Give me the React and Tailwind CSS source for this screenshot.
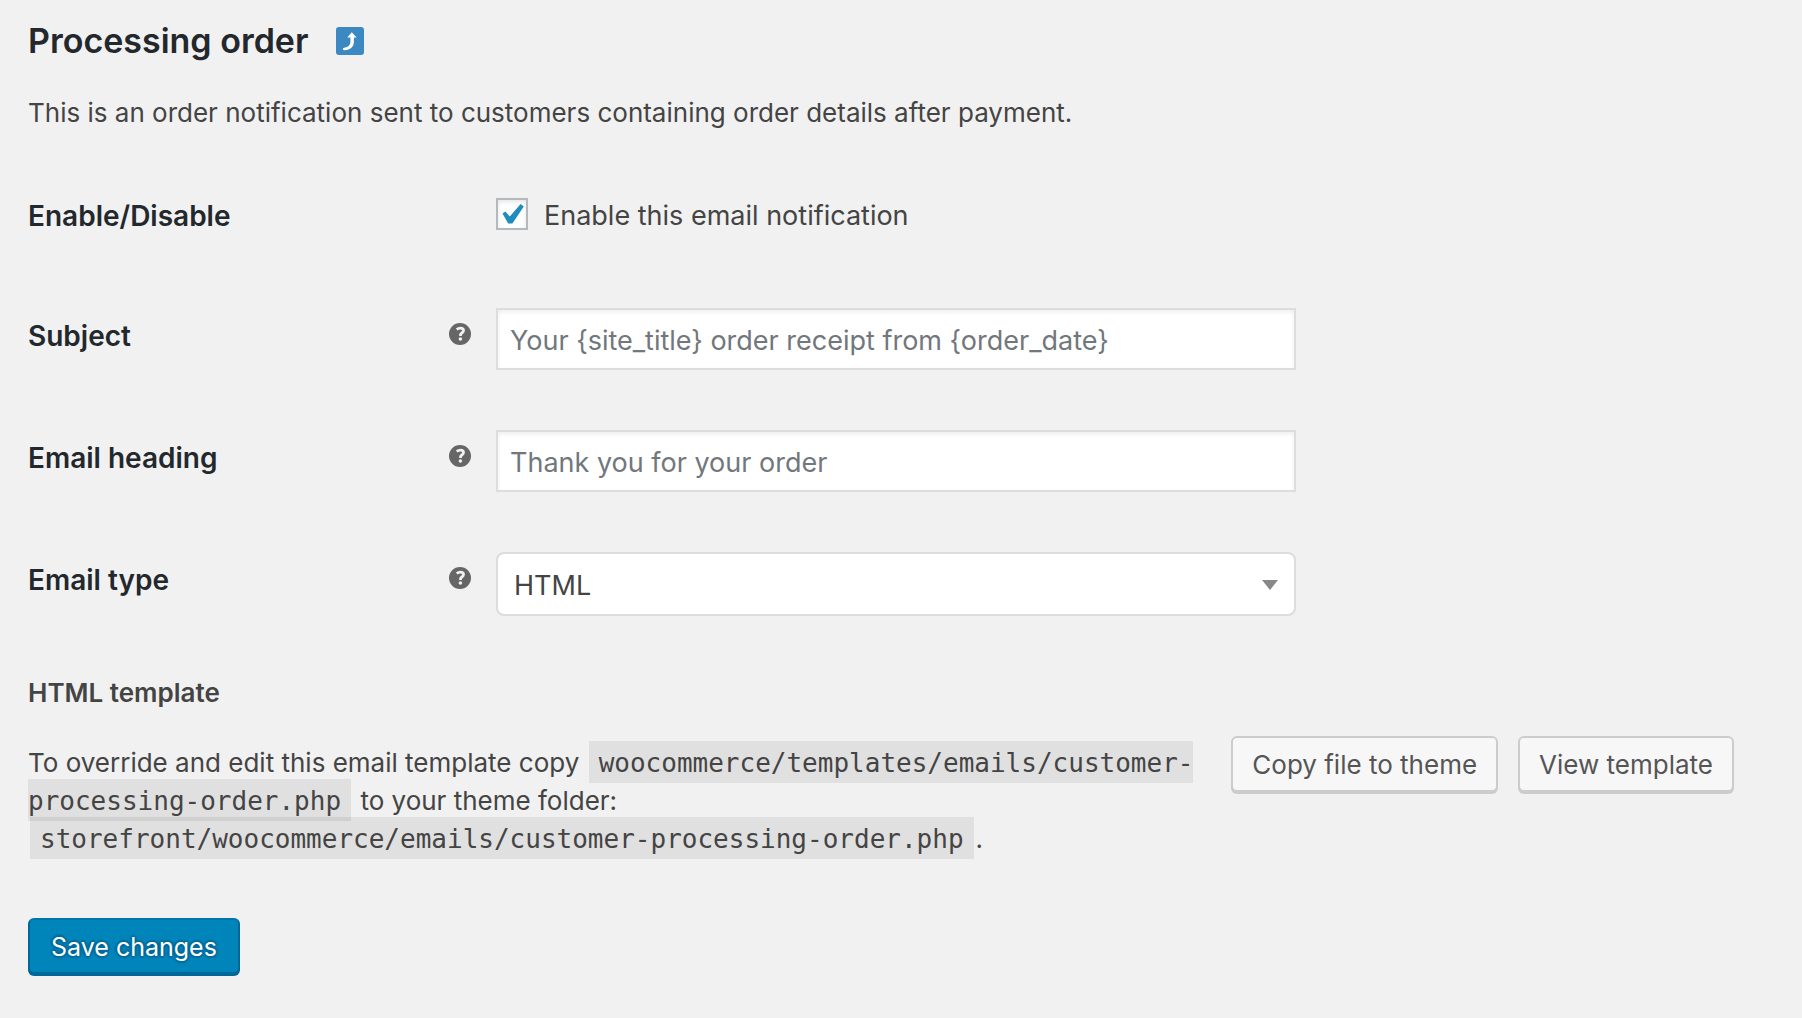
import React from "react";

function HelpTip({ text }) {
  return (
    <button type="button" aria-label={text} title={text} className="mt-[5px] block size-[22px] shrink-0 rounded-full">
      <svg viewBox="0 0 22 22" className="block size-full">
        <circle cx="11" cy="11" r="11" fill="#666" />
        <path
          d="M7.7 6.5C8.8 5.6 10 5.2 11.4 5.2c2 0 3.1 0.9 3.1 2.3 0 1.3-.8 1.9-1.7 2.5-.9.6-1.3 1-1.3 2v1"
          fill="none"
          stroke="#f1f1f1"
          strokeWidth="2.8"
        />
        <circle cx="11.4" cy="16" r="1.8" fill="#f1f1f1" />
      </svg>
    </button>
  );
}

function Row({ id, label, tip, children }) {
  return (
    <div className="flex min-h-[120px] items-start py-[30px]">
      <div className="flex w-[468px] shrink-0 items-start justify-between pt-[10px] pr-[25px]">
        <label htmlFor={id} className="text-[28px] leading-[36px] font-semibold text-[#23282d]">
          {label}
        </label>
        {tip && <HelpTip text={tip} />}
      </div>
      <div className="max-w-[800px] min-w-0 grow">{children}</div>
    </div>
  );
}

const fieldClass =
  "block h-[62px] w-full border-2 border-[#ddd] bg-white px-[12px] pt-[2px] text-[27px] text-[#32373c] shadow-[inset_0_2px_4px_rgba(0,0,0,0.07)] outline-none placeholder:text-[#72777c] placeholder:opacity-100";

const codeClass = "mx-[2px] bg-black/7 px-[10px] pt-[7px] pb-[5px] font-['DejaVu_Sans_Mono',monospace] text-[26px]";

const secondaryButton =
  "h-[56px] rounded-[6px] border-2 border-[#ccc] bg-[#f7f7f7] px-[19px] pt-[2px] text-[26px] whitespace-nowrap text-[#555] shadow-[0_2px_0_#ccc]";

export default function App() {
  return (
    <main className="min-h-screen bg-[#f1f1f1] pr-[68px] pb-[40px] pl-[28px] font-['Inter',sans-serif] text-[26px] leading-[38px] text-[#444]">
      <form onSubmit={(e) => e.preventDefault()}>
        <h2 className="flex items-center gap-[28px] pt-[19px] text-[34px] leading-[44px] font-semibold text-[#23282d]">
          Processing order
          <a href="#emails" aria-label="Return to emails">
            <svg viewBox="0 0 28 28" className="block size-[28px]">
              <rect width="28" height="28" rx="3" fill="#3b88c3" />
              <path
                d="M15.8 5.2 20.6 10.4H17.9V14.5C17.9 20 14.4 23 8.4 23.2 7.2 23.2 6.8 22.6 6.9 21.8 7 21 8 20.7 9 20.5 12.6 19.8 14.4 18 14.4 14.2V10.4H11.2Z"
                fill="#fff"
              />
            </svg>
          </a>
        </h2>
        <p className="mt-[31px]">
          This is an order notification sent to customers containing order details after payment.
        </p>

        <div className="mt-[26px]">
          <Row id="enabled" label="Enable/Disable">
            <label className="flex items-start gap-[16px] pt-[10px] text-[27px] leading-[36px]">
              <span className="relative block size-[32px]">
                <input
                  id="enabled"
                  type="checkbox"
                  defaultChecked
                  className="peer block size-[32px] appearance-none border-2 border-[#b4b9be] bg-white shadow-[inset_0_2px_4px_rgba(0,0,0,0.1)]"
                />
                <svg
                  viewBox="0 0 32 32"
                  className="pointer-events-none absolute inset-0 hidden size-full peer-checked:block"
                >
                  <path d="M6.5 15.6 9.4 13.6 13.8 18.4 24.6 6 27.8 8.4 16.4 25.4H12.2Z" fill="#1e8cbe" />
                </svg>
              </span>
              Enable this email notification
            </label>
          </Row>
          <Row id="subject" label="Subject" tip="Available placeholders: {site_title}, {order_date}">
            <input id="subject" type="text" placeholder="Your {site_title} order receipt from {order_date}" className={fieldClass} />
          </Row>
          <Row id="heading" label="Email heading" tip="Main heading shown in the email">
            <input id="heading" type="text" placeholder="Thank you for your order" className={fieldClass} />
          </Row>
          <Row id="type" label="Email type" tip="Choose which format of email to send">
            <div className="relative">
              <select
                id="type"
                defaultValue="HTML"
                className="block h-[64px] w-full appearance-none rounded-[8px] border-2 border-[#ddd] bg-white px-[16px] pt-[4px] text-[27px] text-[#444] outline-none"
              >
                <option>Plain text</option>
                <option>HTML</option>
                <option>Multipart</option>
              </select>
              <svg viewBox="0 0 16 10" className="pointer-events-none absolute top-[28px] right-[18px] h-[10px] w-[16px]">
                <path d="M0 0H16L8 10Z" fill="#888" />
              </svg>
            </div>
          </Row>
        </div>

        <h4 className="mt-[28px] font-semibold">HTML template</h4>
        <div className="mt-[24px] flex items-start">
          <p className="min-w-0 grow pt-[8px]">
            To override and edit this email template copy{" "}
            <code className={codeClass}>woocommerce/templates/emails/customer-processing-order.php</code> to your theme
            folder: <code className={codeClass}>storefront/woocommerce/emails/customer-processing-order.php</code>.
          </p>
          <div className="ml-[24px] flex shrink-0 gap-[20px]">
            <button type="button" className={secondaryButton}>
              Copy file to theme
            </button>
            <button type="button" className={secondaryButton}>
              View template
            </button>
          </div>
        </div>

        <button
          type="submit"
          className="mt-[60px] block h-[56px] rounded-[6px] border-2 border-[#006799] border-t-[#0073aa] bg-[#0085ba] px-[21px] pt-[2px] text-[25px] text-white shadow-[0_2px_0_#006799] [text-shadow:0_-2px_2px_#006799,2px_0_2px_#006799,0_2px_2px_#006799,-2px_0_2px_#006799]"
        >
          Save changes
        </button>
      </form>
    </main>
  );
}
